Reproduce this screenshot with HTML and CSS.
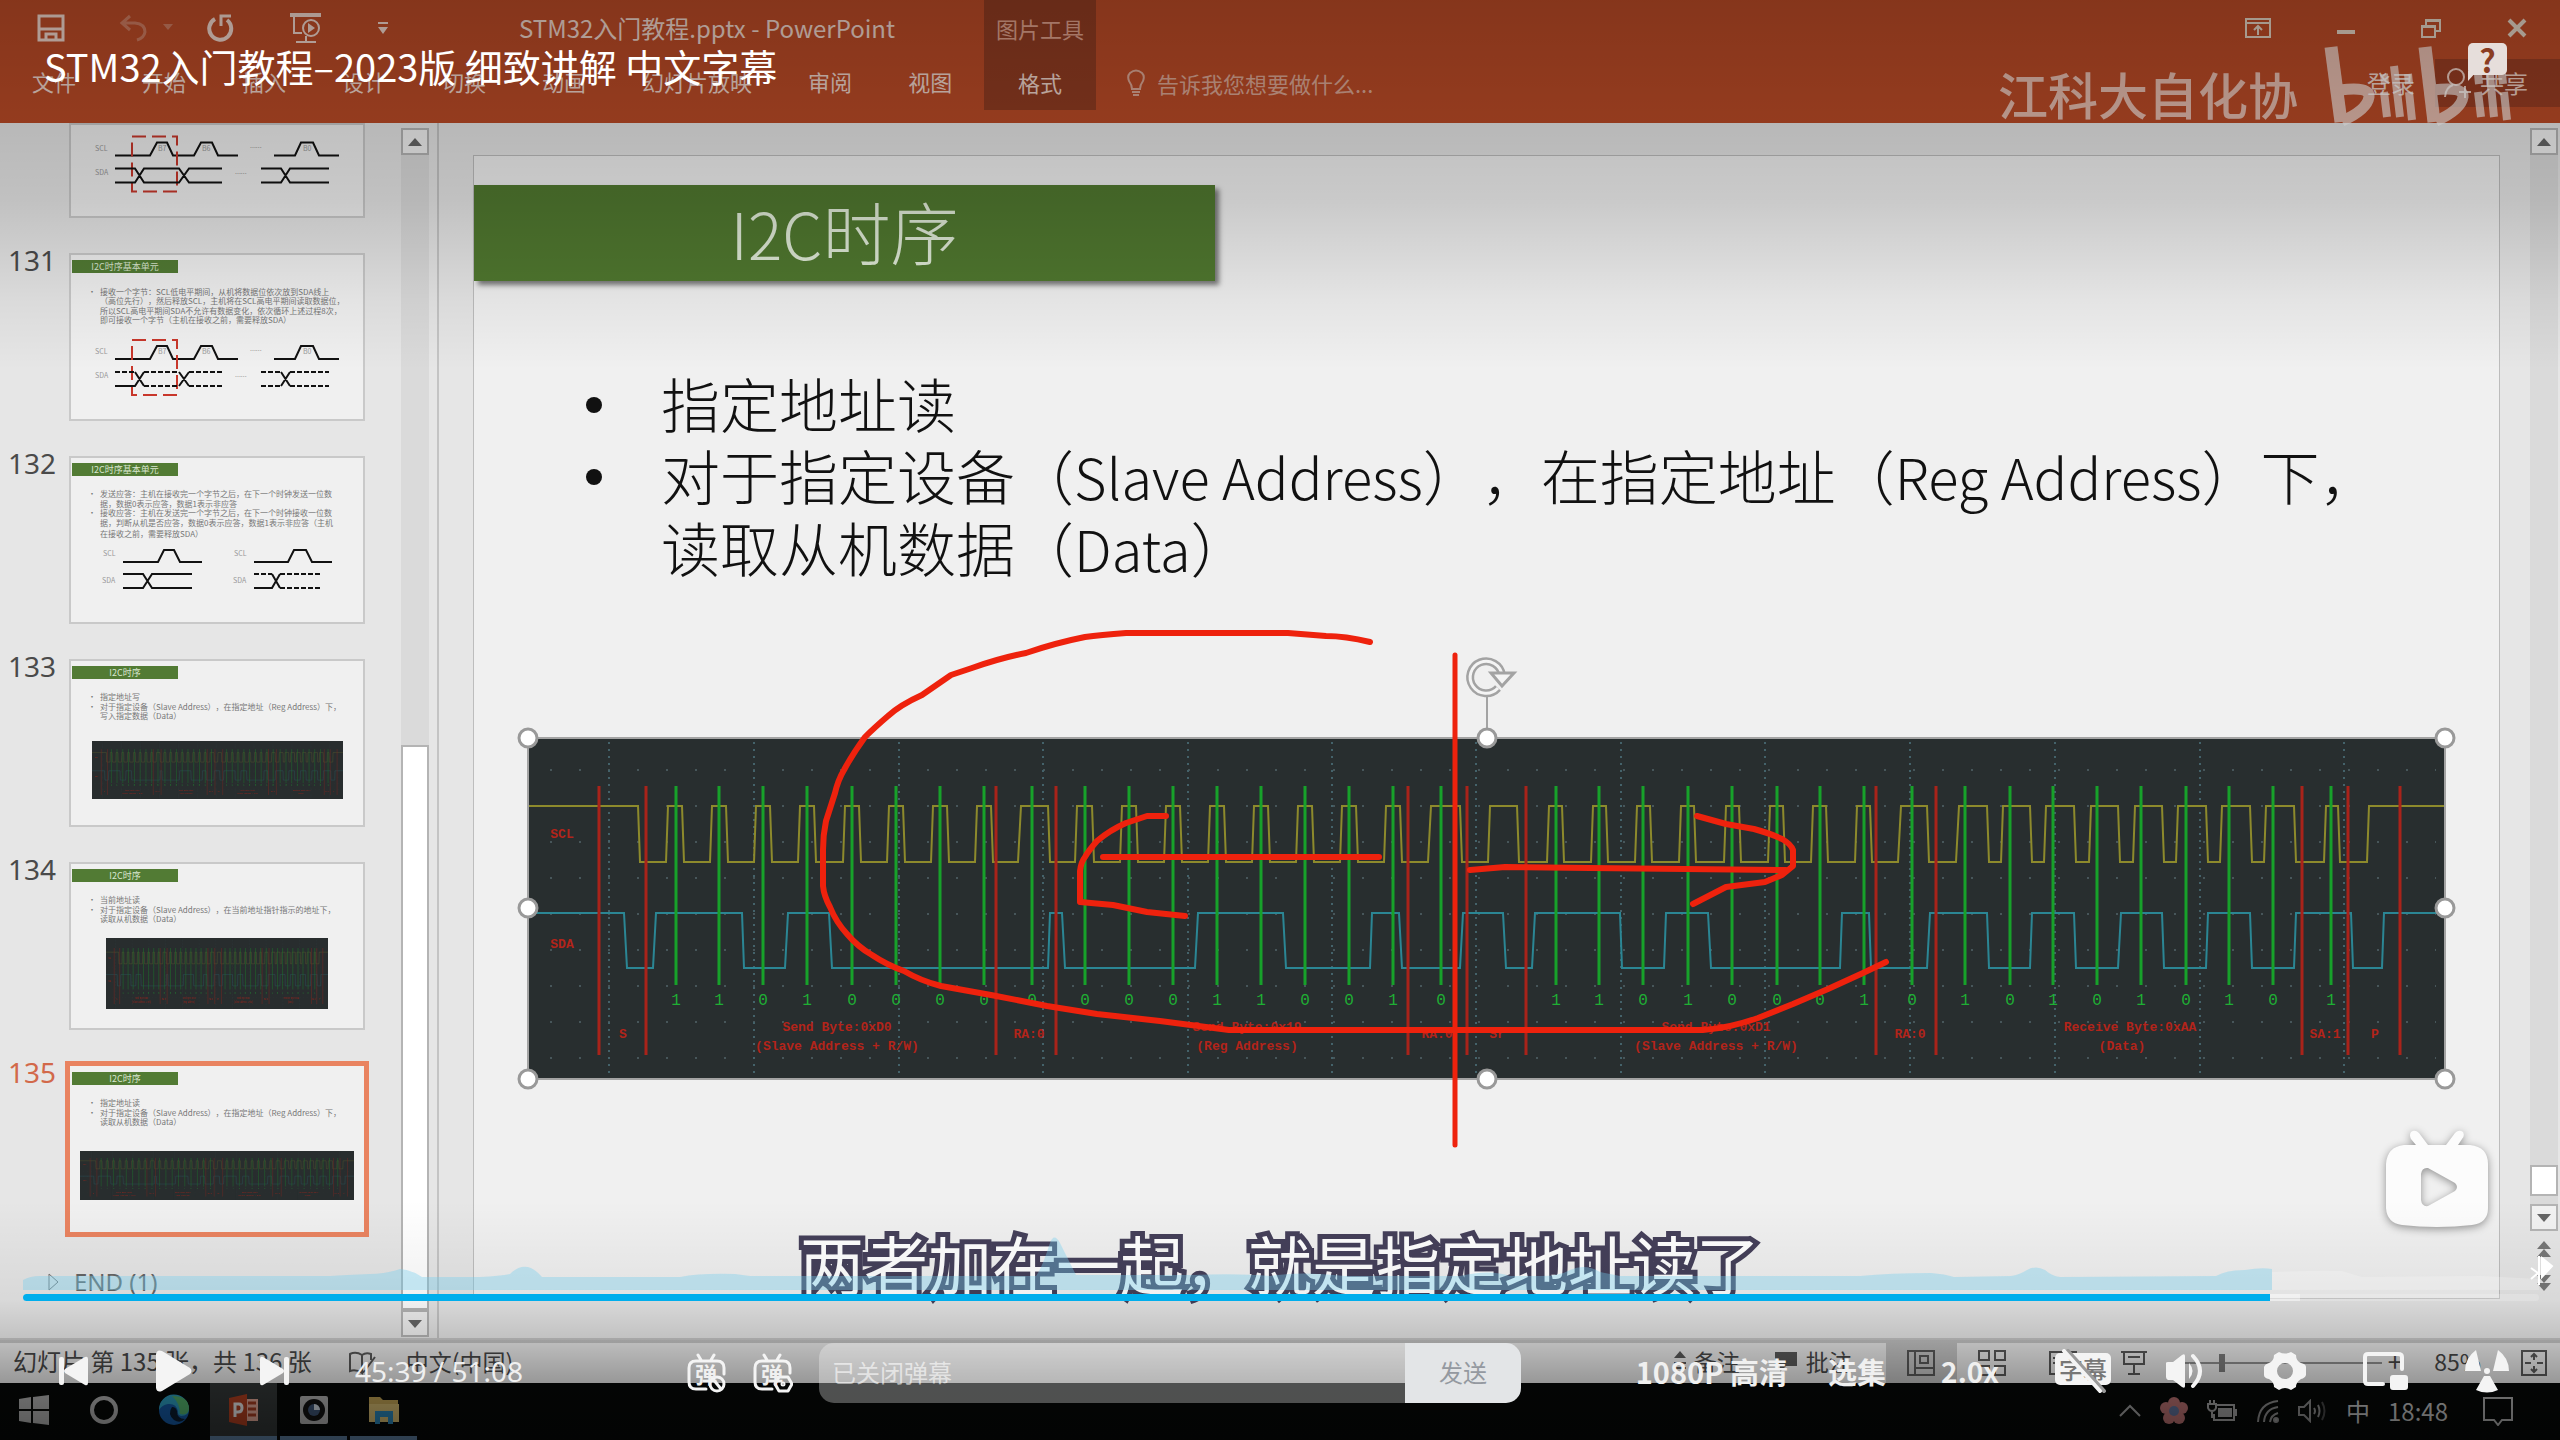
FILE: index.html
```
<!DOCTYPE html>
<html lang="zh-CN">

<head>
    <meta charset="UTF-8">
    <meta name="viewport" content="width=device-width, initial-scale=1.0">
    <title>STM32入门教程-2023版 细致讲解 中文字幕</title>
    <link rel="stylesheet" href="styles.css">
</head>

<body>
    <!-- Общие рисунки -->
    <svg class="defs" aria-hidden="true">
        <defs>
            <pattern id="grid-dots" x="536" y="769" width="29" height="36" patternUnits="userSpaceOnUse">
                <rect x="14" y="0" width="2" height="2" fill="#47565a" />
            </pattern>
            <symbol id="timing" viewBox="528 738 1917 341" preserveAspectRatio="none">
                <rect x="528" y="738" width="1917" height="341" fill="#282e2f" />
                <rect x="536" y="769" width="1900" height="290" fill="url(#grid-dots)" />
                <path d="M609 742V1079M754 742V1079M899 742V1079M1043 742V1079M1188 742V1079M1332 742V1079M1476 742V1079M1621 742V1079M1765 742V1079M1910 742V1079M2055 742V1079M2200 742V1079M2344 742V1079" stroke="#44626a" stroke-width="2" stroke-dasharray="2 5" />
                <path d="M528 806H638L640 862H666L668 806H682L684 862H710L712 806H726L728 862H754L756 806H770L772 862H798L800 806H814L816 862H843L845 806H859L861 862H887L889 806H903L905 862H931L933 806H947L949 862H975L977 806H991L993 862H1018L1021 806H1048L1050 862H1075L1077 806H1092L1094 862H1120L1122 806H1136L1138 862H1164L1166 806H1180L1182 862H1208L1210 806H1224L1226 862H1252L1254 806H1268L1270 862H1296L1298 806H1312L1314 862H1340L1342 806H1356L1358 862H1384L1386 806H1400L1402 862H1428L1431 806H1460L1462 862H1488L1490 806H1517L1519 862H1547L1549 806H1562L1564 862H1591L1593 806H1606L1608 862H1635L1637 806H1650L1652 862H1679L1681 806H1694L1696 862H1724L1726 806H1739L1741 862H1768L1770 806H1783L1785 862H1811L1813 806H1826L1828 862H1855L1857 806H1870L1872 862H1898L1901 806H1927L1929 862H1956L1959 806H1987L1989 862H2001L2003 806H2030L2032 862H2044L2046 806H2074L2076 862H2089L2091 806H2118L2120 862H2133L2135 806H2162L2164 862H2176L2178 806H2206L2208 862H2220L2222 806H2250L2252 862H2264L2266 806H2294L2296 862H2324L2326 806H2338L2340 862H2367L2369 806H2445" fill="none" stroke="#8d8a2c" stroke-width="2" />
                <path d="M528 913H624L627 968H653L656 913H742L744 968H785L788 913H829L832 968H1048L1050 913H1062L1065 968H1195L1198 913H1283L1286 968H1370L1372 913H1399L1402 968H1460L1463 913H1503L1506 968H1532L1535 913H1620L1622 968H1664L1666 913H1708L1711 968H1840L1842 913H1869L1871 968H1927L1930 913H1987L1989 968H2030L2032 913H2074L2076 968H2118L2121 913H2162L2164 968H2206L2208 913H2250L2252 968H2294L2296 913H2351L2353 968H2382L2384 913H2445" fill="none" stroke="#2b8694" stroke-width="2" />
                <path d="M599 786V1055M646 786V1055M996 786V1055M1056 786V1055M1408 786V1055M1467 786V1055M1526 786V1055M1876 786V1055M1936 786V1055M2302 786V1055M2348 786V1055M2400 786V1055" stroke="#a9231a" stroke-width="3" />
                <path d="M676 786V985M719 786V985M763 786V985M807 786V985M852 786V985M896 786V985M940 786V985M984 786V985M1032 786V985M1085 786V985M1129 786V985M1173 786V985M1217 786V985M1261 786V985M1305 786V985M1349 786V985M1393 786V985M1441 786V985M1556 786V985M1599 786V985M1643 786V985M1688 786V985M1732 786V985M1777 786V985M1820 786V985M1864 786V985M1912 786V985M1965 786V985M2010 786V985M2053 786V985M2097 786V985M2141 786V985M2186 786V985M2229 786V985M2273 786V985M2331 786V985" stroke="#17a12a" stroke-width="3" />
                <g class="bits">
                    <text y="1005" x="676 719 763 807 852 896 940 984 1032 1085 1129 1173 1217 1261 1305 1349 1393 1441">110100000000110010</text>
                    <text y="1005" x="1556 1599 1643 1688 1732 1777 1820 1864 1912 1965 2010 2053 2097 2141 2186 2229 2273 2331">110100010101010101</text>
                </g>
                <g class="marks">
                    <text x="562" y="838">SCL</text>
                    <text x="562" y="948">SDA</text>
                    <text x="623" y="1038">S</text>
                    <text x="837" y="1031">Send Byte:0xD0</text>
                    <text x="837" y="1050">(Slave Address + R/W)</text>
                    <text x="1029" y="1038">RA:0</text>
                    <text x="1247" y="1031">Send Byte:0x19</text>
                    <text x="1247" y="1050">(Reg Address)</text>
                    <text x="1437" y="1038">RA:0</text>
                    <text x="1497" y="1038">Sr</text>
                    <text x="1716" y="1031">Send Byte:0xD1</text>
                    <text x="1716" y="1050">(Slave Address + R/W)</text>
                    <text x="1910" y="1038">RA:0</text>
                    <text x="2130" y="1031">Receive Byte:0xAA</text>
                    <text x="2122" y="1050">(Data)</text>
                    <text x="2325" y="1038">SA:1</text>
                    <text x="2375" y="1038">P</text>
                </g>
            </symbol>
            <symbol id="scl-wave" viewBox="0 0 296 168">
                <g fill="none" stroke="#111" stroke-width="2">
                    <path d="M46 106H81L88 93H98L104 106H125L132 93H143L149 106H169M205 106H226L232 93H244L250 106H270" />
                </g>
                <rect x="63" y="87" width="45" height="55" fill="none" stroke="#c8372b" stroke-width="2" stroke-dasharray="14 6" />
                <g class="wave-label">
                    <text x="26" y="101">SCL</text>
                    <text x="26" y="125">SDA</text>
                    <text x="89" y="101">B7</text>
                    <text x="133" y="101">B6</text>
                    <text x="234" y="101">B0</text>
                    <text x="181" y="98">......</text>
                    <text x="166" y="124">......</text>
                </g>
            </symbol>
        </defs>
    </svg>

    <div class="player">
        <!-- Кадр видео: окно PowerPoint -->
        <div class="video">
            <header class="ribbon">
                <div class="quick-bar">
                    <svg width="28" height="28" viewBox="0 0 28 28" fill="none" stroke="#ecd2c8" stroke-width="3"><path d="M2 2H26V26H2ZM3 15H25M9 26V20H19V26" /></svg>
                    <svg class="dim" width="60" height="28" viewBox="0 0 60 28" fill="none" stroke="#ecd2c8" stroke-width="3"><path d="M11 2L3 9L11 16M4 9H16Q26 10 26 18Q25 24 18 26" /><path d="M44 10H54L49 16Z" fill="#ecd2c8" stroke="none" /></svg>
                    <svg width="28" height="28" viewBox="0 0 28 28" fill="none" stroke="#ecd2c8" stroke-width="4"><path d="M8 5A11 11 0 1 0 20 6" /><path d="M14 12V2H24" stroke-width="3" /></svg>
                    <svg width="34" height="30" viewBox="0 0 34 30" fill="none" stroke="#ecd2c8" stroke-width="2"><path d="M1 2H32" stroke-width="4" /><path d="M5 3V20H13M17 23V28M7 29H27" /><circle cx="22" cy="15" r="8" /><path d="M19 10L26 15L19 20Z" fill="#ecd2c8" stroke="none" /></svg>
                    <svg width="12" height="14" viewBox="0 0 12 14" fill="#ecd2c8"><path d="M1 1H11V3H1ZM1 6H11L6 13Z" /></svg>
                    <span class="doc-name">STM32入门教程.pptx - PowerPoint</span>
                    <div class="window-buttons">
                        <svg width="26" height="20" viewBox="0 0 26 20" fill="none" stroke="#e0d0c0" stroke-width="2"><path d="M1 1H25V19H1ZM1 5H25M13 17V8M9 12L13 8L17 12" /></svg>
                        <svg width="18" height="20" viewBox="0 0 18 20"><path d="M0 12H18V16H0Z" fill="#e0d0c0" /></svg>
                        <svg width="20" height="20" viewBox="0 0 20 20" fill="none" stroke="#e0d0c0" stroke-width="2"><path d="M1 8H14V19H1ZM5 7V2H19V13H15M5 3H19M1 9H14" /></svg>
                        <svg width="20" height="20" viewBox="0 0 20 20" fill="none" stroke="#e0d0c0" stroke-width="4"><path d="M2 2L18 18M18 2L2 18" /></svg>
                    </div>
                </div>
                <nav class="tabs">
                    <button class="file">文件</button>
                    <button>开始</button>
                    <button>插入</button>
                    <button>设计</button>
                    <button>切换</button>
                    <button>动画</button>
                    <button>幻灯片放映</button>
                    <button>审阅</button>
                    <button>视图</button>
                </nav>
                <div class="context-tab">
                    <span>图片工具</span>
                    <button>格式</button>
                </div>
                <div class="tell-me">
                    <svg width="20" height="28" viewBox="0 0 20 28" fill="none" stroke="#d9a593" stroke-width="2"><path d="M6 20Q6 16 3 12Q1 7 4 4Q10 -1 16 4Q19 7 17 12Q14 16 14 20Z" /><path d="M6 23H14M7 26H13" /></svg>
                    <span>告诉我您想要做什么...</span>
                </div>
                <div class="account">
                    <button>登录</button>
                    <button class="share">
                        <svg width="28" height="32" viewBox="0 0 28 32" fill="none" stroke="#e9c9bd" stroke-width="2"><circle cx="12" cy="10" r="8" /><path d="M1 30Q2 20 9 18M15 25H27M21 19V31" /></svg>
                        共享
                    </button>
                </div>
                <div class="watermark">
                    <span>江科大自化协</span>
                    <svg width="190" height="84" viewBox="0 0 190 84" fill="none" stroke="#fff" stroke-linejoin="round">
                        <path d="M7 3L17 78" stroke-width="13" />
                        <path d="M16 46Q46 42 45 53Q43 66 18 77" stroke-width="11" />
                        <path d="M60 48L63 73M70 22L76 73M85 48L88 76" stroke-width="8" />
                        <path d="M60 30L61 40M84 30L85 40" stroke-width="8" />
                        <path d="M101 3L110 78" stroke-width="13" />
                        <path d="M109 46Q140 42 139 53Q137 66 112 77" stroke-width="11" />
                        <path d="M154 48L157 73M165 22L170 73M180 48L183 76" stroke-width="8" />
                        <path d="M154 30L155 40M178 30L179 40" stroke-width="8" />
                    </svg>
                </div>
            </header>

            <main class="workspace">
                <aside class="thumbs">
                    <ol>
                        <li class="cut">
                            <span class="num"></span>
                            <svg class="thumb" viewBox="0 74 296 94">
                                <use href="#scl-wave" width="296" height="168" />
                                <path class="wire" d="M46 119H66L75 133H110L120 119H153M46 133H66L75 119H110L120 133H153M192 119H212L221 133H260M192 133H212L221 119H260" />
                            </svg>
                        </li>
                        <li>
                            <span class="num">131</span>
                            <svg class="thumb" viewBox="0 0 296 168">
                                <rect class="bar" x="3" y="7" width="106" height="13" />
                                <text class="bar-text" x="56" y="17">I2C时序基本单元</text>
                                <g class="small-text">
                                    <text x="19" y="42">•</text>
                                    <text x="31" y="42">接收一个字节：SCL低电平期间，从机将数据位依次放到SDA线上</text>
                                    <text x="31" y="51">（高位先行），然后释放SCL，主机将在SCL高电平期间读取数据位，</text>
                                    <text x="31" y="61">所以SCL高电平期间SDA不允许有数据变化，依次循环上述过程8次，</text>
                                    <text x="31" y="70">即可接收一个字节（主机在接收之前，需要释放SDA）</text>
                                </g>
                                <use href="#scl-wave" width="296" height="168" />
                                <path class="wire" d="M46 133H66L75 119M66 119L75 133M110 133L120 119M110 119L120 133M212 119L221 133M212 133L221 119" />
                                <path class="wire dashed" d="M46 119H66M75 119H110M75 133H110M120 119H153M120 133H153M192 119H212M192 133H212M221 119H260M221 133H260" />
                            </svg>
                        </li>
                        <li>
                            <span class="num">132</span>
                            <svg class="thumb" viewBox="0 0 296 168">
                                <rect class="bar" x="3" y="7" width="106" height="13" />
                                <text class="bar-text" x="56" y="17">I2C时序基本单元</text>
                                <g class="small-text">
                                    <text x="19" y="41">•</text>
                                    <text x="31" y="41">发送应答：主机在接收完一个字节之后，在下一个时钟发送一位数</text>
                                    <text x="31" y="51">据，数据0表示应答，数据1表示非应答</text>
                                    <text x="19" y="60">•</text>
                                    <text x="31" y="60">接收应答：主机在发送完一个字节之后，在下一个时钟接收一位数</text>
                                    <text x="31" y="70">据，判断从机是否应答，数据0表示应答，数据1表示非应答（主机</text>
                                    <text x="31" y="81">在接收之前，需要释放SDA）</text>
                                </g>
                                <path class="wire" d="M54 106H89L95 94H105L111 106H133M54 118H74L83 132H123M54 132H74L83 118H123" />
                                <path class="wire" d="M185 106H219L225 94H237L243 106H263M185 132H203L211 118M203 118L211 132" />
                                <path class="wire dashed" d="M185 118H203M211 118H252M211 132H252" />
                                <g class="wave-label">
                                    <text x="34" y="100">SCL</text>
                                    <text x="33" y="127">SDA</text>
                                    <text x="165" y="100">SCL</text>
                                    <text x="164" y="127">SDA</text>
                                </g>
                            </svg>
                        </li>
                        <li>
                            <span class="num">133</span>
                            <svg class="thumb" viewBox="0 0 296 168">
                                <rect class="bar" x="3" y="7" width="106" height="13" />
                                <text class="bar-text" x="56" y="17">I2C时序</text>
                                <g class="small-text">
                                    <text x="19" y="41">•</text>
                                    <text x="31" y="41">指定地址写</text>
                                    <text x="19" y="51">•</text>
                                    <text x="31" y="51">对于指定设备（Slave Address），在指定地址（Reg Address）下，</text>
                                    <text x="31" y="60">写入指定数据（Data）</text>
                                </g>
                                <rect x="23" y="82" width="251" height="58" fill="#282c2d" />
                                <use class="faded" href="#timing" x="23" y="82" width="251" height="58" />
                            </svg>
                        </li>
                        <li>
                            <span class="num">134</span>
                            <svg class="thumb" viewBox="0 0 296 168">
                                <rect class="bar" x="3" y="7" width="106" height="13" />
                                <text class="bar-text" x="56" y="17">I2C时序</text>
                                <g class="small-text">
                                    <text x="19" y="41">•</text>
                                    <text x="31" y="41">当前地址读</text>
                                    <text x="19" y="51">•</text>
                                    <text x="31" y="51">对于指定设备（Slave Address），在当前地址指针指示的地址下，</text>
                                    <text x="31" y="60">读取从机数据（Data）</text>
                                </g>
                                <rect x="37" y="76" width="222" height="71" fill="#282c2d" />
                                <use class="faded" href="#timing" x="37" y="76" width="222" height="71" />
                            </svg>
                        </li>
                        <li class="current">
                            <span class="num">135</span>
                            <svg class="thumb" viewBox="0 0 296 168">
                                <rect class="bar" x="3" y="7" width="106" height="13" />
                                <text class="bar-text" x="56" y="17">I2C时序</text>
                                <g class="small-text">
                                    <text x="19" y="41">•</text>
                                    <text x="31" y="41">指定地址读</text>
                                    <text x="19" y="51">•</text>
                                    <text x="31" y="51">对于指定设备（Slave Address），在指定地址（Reg Address）下，</text>
                                    <text x="31" y="60">读取从机数据（Data）</text>
                                </g>
                                <rect x="11" y="86" width="274" height="49" fill="#282c2d" />
                                <use class="faded" href="#timing" x="11" y="86" width="274" height="49" />
                            </svg>
                        </li>
                    </ol>
                    <div class="section">
                        <svg width="12" height="18" viewBox="0 0 12 18" fill="none" stroke="#777" stroke-width="1"><path d="M1 1L10 9L1 17Z" /></svg>
                        <span>END (1)</span>
                    </div>
                </aside>
                <div class="scrollbar left-scroll">
                    <button aria-label="向上"><svg width="14" height="8" viewBox="0 0 14 8"><path d="M0 8L7 0L14 8Z" fill="#666" /></svg></button>
                    <div class="track"><div class="handle"></div></div>
                    <button aria-label="向下"><svg width="14" height="8" viewBox="0 0 14 8"><path d="M0 0L7 8L14 0Z" fill="#666" /></svg></button>
                </div>

                <section class="canvas">
                    <article class="slide">
                        <h1><span>I2C</span>时序</h1>
                        <ul>
                            <li>指定地址读</li>
                            <li>对于指定设备（<span>Slave Address</span>），在指定地址（<span>Reg Address</span>）下，<br>读取从机数据（<span>Data</span>）</li>
                        </ul>
                        <svg class="figure" viewBox="0 0 1917 341"><use href="#timing" width="1917" height="341" /></svg>
                        <!-- Рамка выделения и пометки пером -->
                        <svg class="ink" viewBox="474 156 2025 1142">
                            <g fill="none" stroke="#a3a3a3" stroke-width="2">
                                <rect x="528" y="738" width="1917" height="341" />
                                <path d="M1487 738V694" />
                                <path d="M1502 675A16 16 0 1 0 1498 688" stroke-width="8" />
                                <path d="M1502 675A16 16 0 1 0 1498 688" stroke="#f4f4f4" stroke-width="3" />
                                <path d="M1491 673H1514L1502 686Z" fill="#f4f4f4" stroke-width="3" />
                            </g>
                            <g fill="#fff" stroke="#999" stroke-width="3">
                                <circle cx="528" cy="738" r="9" />
                                <circle cx="1487" cy="738" r="9" />
                                <circle cx="2445" cy="738" r="9" />
                                <circle cx="528" cy="908" r="9" />
                                <circle cx="2445" cy="908" r="9" />
                                <circle cx="528" cy="1079" r="9" />
                                <circle cx="1487" cy="1079" r="9" />
                                <circle cx="2445" cy="1079" r="9" />
                            </g>
                            <g fill="none" stroke="#ee220d" stroke-width="6" stroke-linecap="round" stroke-linejoin="round">
                                <path d="M1370 642Q1345 636 1326 636L1288 633H1126Q1100 635 1085 637Q1055 643 1026 653Q1000 658 972 668L951 675L922 695Q900 705 888 716Q874 728 865 737Q852 755 844 770Q838 780 835 793L826 821Q823 835 823 850V886Q824 896 830 907Q836 922 847 934Q858 947 872 955Q887 965 904 971Q921 981 941 986L991 995L1047 1006L1097 1014L1160 1021L1229 1030H1703Q1730 1028 1758 1018L1793 1004L1828 989L1863 973L1886 962" />
                                <path d="M1455 655V1145" stroke-width="5" />
                                <path d="M1103 857H1379M1166 816H1147L1126 823Q1110 830 1097 841Q1089 850 1085 857Q1081 862 1080 871V902L1113 905L1147 912L1185 916" />
                                <path d="M1470 870L1505 867L1590 868L1786 870M1697 816L1726 824L1754 829Q1772 834 1782 839Q1791 844 1793 850V866L1782 875L1765 882L1726 887L1693 904" />
                            </g>
                        </svg>
                    </article>
                </section>
                <div class="scrollbar right-scroll">
                    <button aria-label="向上"><svg width="14" height="8" viewBox="0 0 14 8"><path d="M0 8L7 0L14 8Z" fill="#666" /></svg></button>
                    <div class="track"><div class="handle"></div></div>
                    <button aria-label="向下"><svg width="14" height="8" viewBox="0 0 14 8"><path d="M0 0L7 8L14 0Z" fill="#666" /></svg></button>
                    <svg class="pager" width="16" height="50" viewBox="0 0 16 50" fill="#777"><path d="M1 8L8 0L15 8ZM1 16L8 8L15 16ZM1 34L8 42L15 34ZM1 42L8 50L15 42Z" /></svg>
                </div>
            </main>

            <footer class="status">
                <span class="page-info">幻灯片 第 135 张，共 136 张</span>
                <svg class="book" width="30" height="24" viewBox="0 0 30 24" fill="none" stroke="#555" stroke-width="2"><path d="M14 4Q8 0 2 3V20Q8 18 14 22ZM14 4Q18 1 23 3V9M14 22L18 19M18 18L27 6" /></svg>
                <span>中文(中国)</span>
                <div class="status-right">
                    <button class="note"><svg width="12" height="24" viewBox="0 0 12 24" fill="#555"><path d="M0 9L6 2L12 9ZM0 13H12V15H0ZM0 18H12V20H0Z" /></svg>备注</button>
                    <button class="note"><svg width="24" height="24" viewBox="0 0 24 24" fill="#555"><path d="M1 3H23V17H12L6 23V17H1Z" /></svg>批注</button>
                    <button class="view on" aria-label="普通视图"><svg width="28" height="26" viewBox="0 0 28 26" fill="none" stroke="#555" stroke-width="2"><path d="M1 1H27V25H1ZM8 1V25M8 18H27M13 6H21V13H13Z" /></svg></button>
                    <button class="view" aria-label="幻灯片浏览"><svg width="28" height="26" viewBox="0 0 28 26" fill="none" stroke="#555" stroke-width="2"><path d="M1 1H11V10H1ZM17 1H27V10H17ZM1 16H11V25H1ZM17 16H27V25H17Z" /></svg></button>
                    <button class="view" aria-label="阅读视图"><svg width="28" height="26" viewBox="0 0 28 26" fill="none" stroke="#555" stroke-width="2"><path d="M1 2H13V24H1ZM13 2H27V24H13M4 8H10M4 13H10M17 8H24M17 13H24" /></svg></button>
                    <button class="view" aria-label="幻灯片放映"><svg width="28" height="26" viewBox="0 0 28 26" fill="none" stroke="#555" stroke-width="2"><path d="M1 2H27M4 3V14H24V3M14 14V24M8 24H20M8 7H20" /></svg></button>
                    <input class="zoom" type="range" min="10" max="400" value="85" aria-label="缩放">
                    <span class="plus">+</span>
                    <span class="percent">85%</span>
                    <svg width="26" height="26" viewBox="0 0 26 26" fill="none" stroke="#555" stroke-width="2"><path d="M1 1H25V25H1Z" /><path d="M13 4V10M13 16V22M4 13H10M16 13H22M10 7L13 4L16 7M10 19L13 22L16 19" /></svg>
                </div>
            </footer>

            <div class="taskbar">
                <button aria-label="开始"><svg width="32" height="30" viewBox="0 0 32 30" fill="#aaa"><path d="M1 4L13 2V14H1ZM15 2L31 0V14H15ZM1 16H13V28L1 26ZM15 16H31V30L15 28Z" /></svg></button>
                <button aria-label="Cortana"><svg width="30" height="30" viewBox="0 0 30 30" fill="none" stroke="#aaa" stroke-width="4"><circle cx="15" cy="15" r="12" /></svg></button>
                <button aria-label="Edge"><svg width="32" height="32" viewBox="0 0 32 32"><circle cx="16" cy="16" r="15" fill="#14549a" /><path d="M1 16A15 15 0 0 1 31 15Q31 22 23 22Q19 21 20 17Q18 9 10 10Q4 11 1 16Z" fill="#2a94b5" /><path d="M14 2Q31 2 31 15Q30 22 22 20Q22 9 14 2Z" fill="#4fa866" /><path d="M14 13Q9 20 16 26Q22 30 27 25Q19 25 19 17Q18 13 14 13Z" fill="#0a1a2c" /></svg></button>
                <button class="active" aria-label="PowerPoint"><svg width="32" height="32" viewBox="0 0 32 32"><path d="M16 5H30V27H16Z" fill="#d8a090" /><path d="M20 9H28M20 15H28M20 21H28" stroke="#9c3a20" stroke-width="3" /><path d="M1 4L19 0V32L1 28Z" fill="#a83c1e" /><path d="M7 23V10H11Q14 10 14 14Q14 18 10 18H7" fill="none" stroke="#ddd" stroke-width="3" /></svg></button>
                <button class="open" aria-label="录屏"><svg width="30" height="30" viewBox="0 0 30 30"><rect x="1" y="1" width="28" height="28" rx="2" fill="#aaa" /><circle cx="15" cy="15" r="11" fill="#111" /><circle cx="15" cy="15" r="6" fill="#3a5070" /><path d="M15 9A6 6 0 0 1 21 15H15Z" fill="#c8d0d8" /></svg></button>
                <button class="open" aria-label="资源管理器"><svg width="32" height="28" viewBox="0 0 32 28"><path d="M1 1H12L15 4H30V26H1Z" fill="#b79a50" /><path d="M1 8H31V26H1Z" fill="#c9b06a" /><path d="M7 28V15H25V28H20V21H12V28Z" fill="#2a7fae" /></svg></button>
                <div class="tray">
                    <svg width="24" height="14" viewBox="0 0 24 14" fill="none" stroke="#999" stroke-width="2"><path d="M2 12L12 2L22 12" /></svg>
                    <svg width="28" height="28" viewBox="0 0 28 28" fill="#b06b6b"><circle cx="14" cy="6" r="6" /><circle cx="6" cy="11" r="6" /><circle cx="22" cy="11" r="6" /><circle cx="9" cy="21" r="6" /><circle cx="19" cy="21" r="6" /><circle cx="14" cy="14" r="5" fill="#596a90" /></svg>
                    <svg width="32" height="24" viewBox="0 0 32 24" fill="none" stroke="#999" stroke-width="2"><path d="M10 6H28V21H8V15M30 10V17M2 5H10V9Q9 12 6 12Q3 12 2 9ZM4 1V5M8 1V5M6 12V19" /><path d="M13 10H25V17H13Z" fill="#999" /></svg>
                    <svg width="24" height="24" viewBox="0 0 24 24" fill="none" stroke="#888" stroke-width="2"><path d="M2 23Q3 4 22 2M8 23Q9 10 22 8M14 23Q15 16 22 14" /><circle cx="20" cy="21" r="2" fill="#999" /></svg>
                    <svg width="30" height="24" viewBox="0 0 30 24" fill="none" stroke="#888" stroke-width="2"><path d="M1 8H6L12 2V22L6 16H1ZM16 9Q18 12 16 15M20 6Q23 12 20 18" /><path d="M24 3Q29 12 24 21" stroke="#444" /></svg>
                    <span>中</span>
                    <time>18:48</time>
                    <svg width="32" height="30" viewBox="0 0 32 30" fill="none" stroke="#aaa" stroke-width="2"><path d="M2 2H30V24H20L16 29L12 24H2Z" /></svg>
                </div>
            </div>

            <p class="subtitle">两者加在一起，就是指定地址读了</p>
        </div>

        <!-- Управление плеером -->
        <div class="top-shade">
            <p class="video-title">STM32入门教程–2023版 细致讲解 中文字幕</p>
            <button class="help" aria-label="帮助">?</button>
        </div>

        <button class="badge" aria-label="播放">
            <svg width="104" height="98" viewBox="0 0 104 98">
                <path d="M26 2Q30 -1 34 3L43 15H61L70 3Q74 -1 78 2Q80 6 77 9L73 15H85Q103 17 103 34V78Q103 93 87 95Q52 99 17 95Q2 93 1 78V34Q2 17 19 15H31L26 9Q24 5 26 2ZM36 44V70Q37 77 43 76L70 61Q74 57 70 53L43 38Q37 37 36 44Z" fill="#fcfcfc" fill-rule="evenodd" />
            </svg>
        </button>

        <div class="bottom-shade">
            <div class="progress">
                <svg class="heat" viewBox="23 1236 2516 54" preserveAspectRatio="none">
                    <path d="M23 1290V1280Q30 1276 40 1276H330Q345 1275 370 1274Q385 1274 400 1269Q412 1270 422 1277H480Q500 1276 510 1274Q526 1258 542 1277H680Q700 1273 735 1274L750 1276H1036Q1042 1268 1050 1243Q1054 1232 1060 1243L1076 1275H1190Q1240 1273 1270 1276Q1300 1271 1345 1276H1460Q1490 1269 1510 1276H1540Q1560 1276 1570 1270Q1585 1263 1600 1272L1620 1276H1860Q1890 1273 1931 1273Q1945 1274 1954 1277L2011 1276Q2019 1275 2027 1270Q2036 1265 2045 1270Q2052 1276 2060 1277L2216 1276Q2226 1270 2245 1270Q2262 1267 2272 1269V1290Z" fill="rgba(113, 205, 238, 0.37)" />
                    <path d="M2272 1290V1272Q2320 1270 2342 1271L2362 1277L2480 1276L2539 1279V1290Z" fill="rgba(255, 255, 255, 0.2)" />
                </svg>
                <div class="line">
                    <div class="buffered"></div>
                    <div class="played"></div>
                </div>
                <svg class="knob" width="24" height="32" viewBox="0 0 24 32" fill="#fff" stroke="#fff" stroke-width="2"><path d="M9 1V30M1 13L8 18L1 24" fill="none" /><path d="M12 3L22 11L12 22Z" /></svg>
            </div>
            <div class="controls">
                <div class="left">
                    <button aria-label="上一个"><svg width="30" height="30" viewBox="0 0 30 30" fill="#f4f4f4"><rect x="0" y="1" width="5" height="28" rx="2" /><path d="M26 1Q29 0 29 3V27Q29 30 26 29L6 17Q4 15 6 13Z" /></svg></button>
                    <button aria-label="播放"><svg width="38" height="42" viewBox="0 0 38 42" fill="#f4f4f4"><path d="M1 4Q2 -1 7 1L35 18Q38 21 35 24L7 41Q2 43 1 38Z" /></svg></button>
                    <button aria-label="下一个"><svg width="30" height="30" viewBox="0 0 30 30" fill="#f4f4f4"><rect x="25" y="1" width="5" height="28" rx="2" /><path d="M4 1Q1 0 1 3V27Q1 30 4 29L24 17Q26 15 24 13Z" /></svg></button>
                    <span class="time">45:39 / 51:08</span>
                </div>
                <form class="danmaku">
                    <button type="button" class="dm" aria-label="弹幕开关">
                        <svg width="40" height="40" viewBox="0 0 40 40" fill="none" stroke="#f4f4f4" stroke-width="3" stroke-linecap="round"><path d="M11 2L14 7M27 2L24 7M19 36H9Q2 36 2 29V15Q2 8 9 8H30Q37 8 37 15V21" /><circle cx="30" cy="31" r="7" /><path d="M26 26L34 36" /></svg>
                        <span>弹</span>
                    </button>
                    <button type="button" class="dm" aria-label="弹幕设置">
                        <svg width="40" height="40" viewBox="0 0 40 40" fill="none" stroke="#f4f4f4" stroke-width="3" stroke-linecap="round"><path d="M11 2L14 7M27 2L24 7M19 36H9Q2 36 2 29V15Q2 8 9 8H30Q37 8 37 15V20" /><path d="M26 24H35L39 31L35 38H26L22 31Z" stroke-linejoin="round" /><circle cx="30" cy="31" r="1" /></svg>
                        <span>弹</span>
                    </button>
                    <input type="text" placeholder="已关闭弹幕" aria-label="弹幕">
                    <button type="button" class="send">发送</button>
                </form>
                <div class="right">
                    <div class="quality">
                        <button>1080P 高清</button>
                        <button>选集</button>
                    </div>
                    <button>2.0x</button>
                    <button aria-label="字幕" class="cc">
                        <svg width="58" height="44" viewBox="0 0 58 44"><rect x="1" y="4" width="56" height="32" rx="5" fill="#f4f4f4" /></svg>
                        <span>字幕</span>
                        <svg class="slash" width="58" height="44" viewBox="0 0 58 44" stroke-linecap="round"><path d="M14 2L50 42" stroke="#999" stroke-width="4" /><path d="M10 2L46 42" stroke="#f4f4f4" stroke-width="4" /></svg>
                    </button>
                    <button aria-label="音量"><svg width="46" height="40" viewBox="0 0 46 40" fill="#f4f4f4"><path d="M5 12Q5 11 7 11H12L21 4Q24 2 24 5V35Q24 38 21 36L12 29H7Q5 28 5 26Z" /><path d="M28 12Q35 20 28 28Z" /><path d="M32 5Q46 20 32 35" fill="none" stroke="#f4f4f4" stroke-width="4" stroke-linecap="round" /></svg></button>
                    <button aria-label="设置"><svg width="46" height="44" viewBox="0 0 46 44"><path d="M17 3Q23 6 29 3L34 6Q34 12 39 14Q44 15 44 18V26Q43 29 39 30Q34 33 34 38L29 41Q23 37 17 41L12 38Q12 33 7 30Q2 29 2 26V18Q3 15 7 14Q12 12 12 6ZM23 14A8 8 0 1 0 23 30A8 8 0 1 0 23 14Z" fill="#f4f4f4" fill-rule="evenodd" /></svg></button>
                    <button aria-label="小窗"><svg width="46" height="42" viewBox="0 0 46 42" fill="none" stroke="#f4f4f4" stroke-width="4" stroke-linecap="round"><path d="M20 34H5Q2 34 2 31V7Q2 4 5 4H35Q39 4 39 7V19" /><rect x="28" y="26" width="16" height="13" rx="2" fill="#f4f4f4" stroke-width="2" /></svg></button>
                    <button aria-label="网页全屏"><svg width="46" height="44" viewBox="0 0 46 44" fill="#f4f4f4"><circle cx="23" cy="22" r="3" /><path d="M17 22H1Q1 9 12 1ZM29 22H45Q45 9 34 1ZM20 27H26L34 41Q23 46 12 41Z" /></svg></button>
                </div>
            </div>
        </div>
    </div>
</body>

</html>
```
FILE: styles.css
```
* {
    box-sizing: border-box;
}

body {
    margin: 0;
    background-color: #000;
    font-family: "Noto Sans CJK SC", "Noto Sans", sans-serif;
    text-spacing-trim: space-all;
}

button {
    padding: 0;
    border: none;
    background: none;
    color: inherit;
    font: inherit;
    cursor: pointer;
}

svg {
    display: block;
    flex-shrink: 0;
}

p,
h1,
ul,
ol {
    margin: 0;
    padding: 0;
    list-style: none;
}

.defs {
    position: absolute;
    width: 0;
    height: 0;
}

.player {
    position: relative;
    height: 100vh;
    overflow: hidden;
}

.video {
    display: flex;
    flex-direction: column;
    height: 100%;
}

/* Лента */
.ribbon {
    position: relative;
    height: 123px;
    flex-shrink: 0;
    background-color: #b94a26;
    color: #ecd2c8;
    font-size: 22px;
    line-height: 32px;
}

.quick-bar {
    display: flex;
    align-items: center;
    height: 56px;
    padding: 0 33px 0 37px;
    gap: 54px;
}

.quick-bar .dim {
    opacity: 0.35;
    margin-right: -26px;
}

.doc-name {
    margin-left: 76px;
    font-size: 24px;
}

.window-buttons {
    display: flex;
    gap: 66px;
    margin-left: auto;
}

.tabs {
    display: flex;
    gap: 56px;
    padding: 9px 0 0 32px;
}

.tabs .file {
    margin-right: 10px;
}

.context-tab {
    position: absolute;
    left: 984px;
    top: 0;
    width: 112px;
    height: 110px;
    padding: 12px 0;
    display: flex;
    flex-direction: column;
    align-items: center;
    justify-content: space-between;
    background-color: #8f3b21;
}

.context-tab span {
    color: #dd9f8a;
}

.tell-me {
    position: absolute;
    left: 1126px;
    top: 67px;
    display: flex;
    align-items: center;
    gap: 11px;
    color: #d9a593;
}

.account {
    position: absolute;
    right: 0;
    top: 59px;
    display: flex;
    gap: 20px;
    font-size: 24px;
}

.share {
    display: flex;
    align-items: center;
    gap: 8px;
    width: 125px;
    height: 48px;
    padding-left: 9px;
    background-color: #963c22;
    color: #e9c9bd;
}

.watermark {
    position: absolute;
    right: 46px;
    top: 44px;
    display: flex;
    gap: 26px;
    opacity: 0.62;
    color: #fff;
    font-size: 50px;
    font-weight: 500;
    line-height: 98px;
}

/* Рабочая область */
.workspace {
    display: flex;
    flex: 1;
    min-height: 0;
    background-color: #e6e6e6;
    border-bottom: 2px solid #c6c6c6;
}

.thumbs {
    width: 401px;
    overflow: hidden;
}

.thumbs ol {
    display: flex;
    flex-direction: column;
    gap: 35px;
}

.thumbs li {
    display: flex;
    padding-left: 8px;
}

.num {
    width: 61px;
    margin-top: -9px;
    font-family: "Noto Sans", sans-serif;
    font-size: 28px;
    line-height: 32px;
    color: #4a4a4a;
}

.thumb {
    width: 296px;
    height: 168px;
    background-color: #f0f0f0;
    outline: 2px solid #c9c9c9;
    outline-offset: -2px;
}

.cut .thumb {
    height: 95px;
}

.current .num {
    color: #d2694a;
}

.current .thumb {
    outline: 5px solid #e98360;
    outline-offset: -1px;
}

.bar {
    fill: #527b34;
}

.bar-text {
    fill: #d9e6cf;
    font-size: 9px;
    text-anchor: middle;
}

.small-text {
    fill: #777;
    font-size: 8px;
}

.wave-label {
    fill: #999;
    font-size: 7px;
}

.wire {
    fill: none;
    stroke: #111;
    stroke-width: 2;
}

.dashed {
    stroke-dasharray: 5 2;
}

.faded {
    opacity: 0.65;
}

.section {
    display: flex;
    align-items: center;
    gap: 14px;
    padding: 33px 0 0 48px;
    color: #666;
    font-family: "Noto Sans", sans-serif;
    font-size: 24px;
    line-height: 32px;
}

.scrollbar {
    display: flex;
    flex-direction: column;
    width: 28px;
    padding: 5px 0 1px;
}

.scrollbar button {
    display: flex;
    align-items: center;
    justify-content: center;
    height: 27px;
    border: 2px solid #b4b4b4;
    background-color: #f2f2f2;
}

.track {
    display: flex;
    flex-direction: column;
    flex: 1;
    background-color: #dadada;
}

.handle {
    border: 2px solid #b4b4b4;
    background-color: #fff;
}

.left-scroll .handle {
    margin-top: 590px;
    flex: 1;
}

.right-scroll {
    margin-right: 2px;
    padding-bottom: 47px;
}

.right-scroll .handle {
    height: 31px;
    margin: auto 0 8px;
}

.pager {
    margin: 10px auto 0;
}

.canvas {
    display: flex;
    flex: 1;
    margin-left: 8px;
    padding: 32px 30px 39px 34px;
    border-left: 2px solid #c4c4c4;
}

.slide {
    position: relative;
    flex: 1;
    border: 1px solid #bdbdbd;
    background-color: #f0f0f0;
}

.slide h1 {
    width: 741px;
    height: 96px;
    margin-top: 29px;
    background-color: #50782f;
    box-shadow: 4px 4px 5px rgba(0, 0, 0, 0.5);
    color: #dfead6;
    font-size: 68px;
    font-weight: 300;
    line-height: 92px;
    text-align: center;
}

.slide h1 span {
    font-size: 64px;
    line-height: 1;
}

.slide ul {
    padding: 86px 0 0 187px;
    color: #111;
    font-size: 59px;
    font-weight: 300;
    line-height: 72px;
}

.slide li {
    position: relative;
}

.slide li::before {
    content: "";
    position: absolute;
    left: -75px;
    top: 30px;
    width: 16px;
    height: 16px;
    border-radius: 50%;
    background-color: #111;
}

.slide li span {
    font-size: 56px;
    line-height: 1;
}

.figure {
    width: auto;
    margin: 155px 54px 0;
}

.bits {
    fill: #1fae34;
    font-family: "Liberation Mono", monospace;
    font-size: 16px;
    text-anchor: middle;
}

.marks {
    fill: #b3241a;
    font-family: "Liberation Mono", monospace;
    font-size: 13px;
    font-weight: bold;
    text-anchor: middle;
}

.ink {
    position: absolute;
    inset: 0;
    width: 100%;
    height: 100%;
    overflow: visible;
}

/* Строка состояния */
.status {
    display: flex;
    align-items: center;
    height: 43px;
    flex-shrink: 0;
    padding: 0 13px;
    border-top: 3px solid #bdbdbd;
    background-color: #e2e2e2;
    color: #444;
    font-size: 23px;
    line-height: 32px;
}

.status span {
    padding-bottom: 4px;
}

.status .page-info {
    font-size: 24px;
}

.book {
    margin: 0 28px 0 36px;
}

.status-right {
    display: flex;
    align-items: center;
    height: 100%;
    margin-left: auto;
}

.note {
    display: flex;
    align-items: center;
    gap: 8px;
    margin-right: 34px;
    padding-bottom: 4px;
}

.view {
    display: flex;
    align-items: center;
    justify-content: center;
    width: 71px;
    height: 100%;
}

.view.on {
    background-color: #bcbcbc;
}

.zoom {
    appearance: none;
    width: 200px;
    height: 2px;
    margin: 0 6px 0 12px;
    background-color: #888;
}

.zoom::-webkit-slider-thumb {
    appearance: none;
    width: 6px;
    height: 18px;
    background-color: #777;
}

.plus {
    font-size: 26px;
}

.percent {
    margin: 0 40px 0 32px;
}

/* Панель задач */
.taskbar {
    display: flex;
    gap: 3px;
    height: 57px;
    flex-shrink: 0;
    background-color: #060807;
}

.taskbar button {
    display: flex;
    align-items: center;
    justify-content: center;
    width: 67px;
    border-bottom: 4px solid transparent;
}

.taskbar .active {
    background-color: #303434;
    border-bottom-color: #5c7d9e;
}

.taskbar .open {
    border-bottom-color: #5c7d9e;
}

.tray {
    display: flex;
    align-items: center;
    gap: 18px;
    margin-left: auto;
    padding: 0 46px 2px 0;
    color: #bbb;
    font-size: 24px;
}

.tray time {
    margin-right: 16px;
}

.subtitle {
    position: absolute;
    left: 0;
    right: 0;
    bottom: 130px;
    color: #fff;
    font-size: 64px;
    line-height: 96px;
    text-align: center;
    -webkit-text-stroke: 10px #45405a;
    paint-order: stroke fill;
}

/* Слои плеера */
.top-shade {
    position: absolute;
    left: 0;
    right: 0;
    top: 0;
    height: 370px;
    background: linear-gradient(rgba(0, 0, 0, 0.28), rgba(0, 0, 0, 0.2) 124px, rgba(0, 0, 0, 0.16) 200px, rgba(0, 0, 0, 0.05) 300px, transparent);
}

.video-title {
    padding: 40px 0 0 44px;
    color: #fff;
    font-size: 38px;
    line-height: 52px;
}

.help {
    position: absolute;
    right: 53px;
    top: 43px;
    width: 39px;
    height: 32px;
    border-radius: 5px;
    background-color: #e6dedb;
    color: #8a3c22;
    font-size: 32px;
    font-weight: bold;
    line-height: 32px;
}

.help::after {
    content: "";
    position: absolute;
    left: 0;
    top: 28px;
    border-top: 10px solid #e6dedb;
    border-right: 9px solid transparent;
}

.badge {
    position: absolute;
    right: 71px;
    bottom: 212px;
    filter: drop-shadow(0 2px 4px rgba(0, 0, 0, 0.4));
}

.bottom-shade {
    position: absolute;
    left: 0;
    right: 0;
    bottom: 0;
    padding-top: 36px;
    background: linear-gradient(transparent, rgba(0, 0, 0, 0.06) 100px, rgba(0, 0, 0, 0.17) 143px, rgba(0, 0, 0, 0.33) 183px, rgba(0, 0, 0, 0.5));
}

.progress {
    position: relative;
    margin: 0 21px 0 23px;
}

.heat {
    width: 100%;
    height: 54px;
}

.line {
    position: relative;
    height: 7px;
    margin-top: 4px;
    border-radius: 4px;
    background-color: rgba(255, 255, 255, 0.2);
    overflow: hidden;
}

.buffered,
.played {
    position: absolute;
    left: 0;
    top: 0;
    height: 100%;
}

.buffered {
    width: 90.5%;
    background-color: rgba(255, 255, 255, 0.4);
}

.played {
    width: 89.3%;
    background-color: #00aeec;
}

.knob {
    position: absolute;
    right: -15px;
    top: 19px;
}

.controls {
    display: flex;
    align-items: center;
    height: 60px;
    margin: 42px 50px 37px 59px;
    color: #f0f0f0;
    font-size: 28px;
}

.left {
    display: flex;
    align-items: center;
    gap: 66px;
    width: 628px;
    padding-bottom: 4px;
}

.time {
    font-family: "Noto Sans", sans-serif;
    font-size: 28px;
}

.danmaku {
    display: flex;
    align-items: center;
    width: 834px;
    height: 100%;
}

.dm {
    position: relative;
    margin-right: 26px;
}

.dm span {
    position: absolute;
    left: 8px;
    top: 8px;
    font-size: 22px;
    font-weight: bold;
    line-height: 24px;
}

.danmaku input {
    flex: 1;
    min-width: 0;
    height: 100%;
    padding: 0 13px 4px;
    border: none;
    border-radius: 15px 0 0 15px;
    background-color: rgba(255, 255, 255, 0.3);
    color: #fff;
    font: inherit;
    font-size: 24px;
}

.danmaku input::placeholder {
    color: rgba(255, 255, 255, 0.6);
}

.send {
    width: 116px;
    height: 100%;
    padding-bottom: 4px;
    border-radius: 0 15px 15px 0;
    background-color: #e3e5e7;
    color: #9499a0;
    font-size: 24px;
}

.right {
    display: flex;
    align-items: center;
    gap: 55px;
    margin-left: auto;
    padding-bottom: 4px;
    font-weight: bold;
}

.quality {
    display: flex;
    gap: 40px;
    font-size: 29px;
}

.cc {
    position: relative;
    margin-right: -6px;
}

.cc span {
    position: absolute;
    left: 5px;
    top: 6px;
    color: #777;
    font-size: 24px;
    font-weight: 500;
    line-height: 28px;
}

.slash {
    position: absolute;
    left: 0;
    top: 0;
}
```
